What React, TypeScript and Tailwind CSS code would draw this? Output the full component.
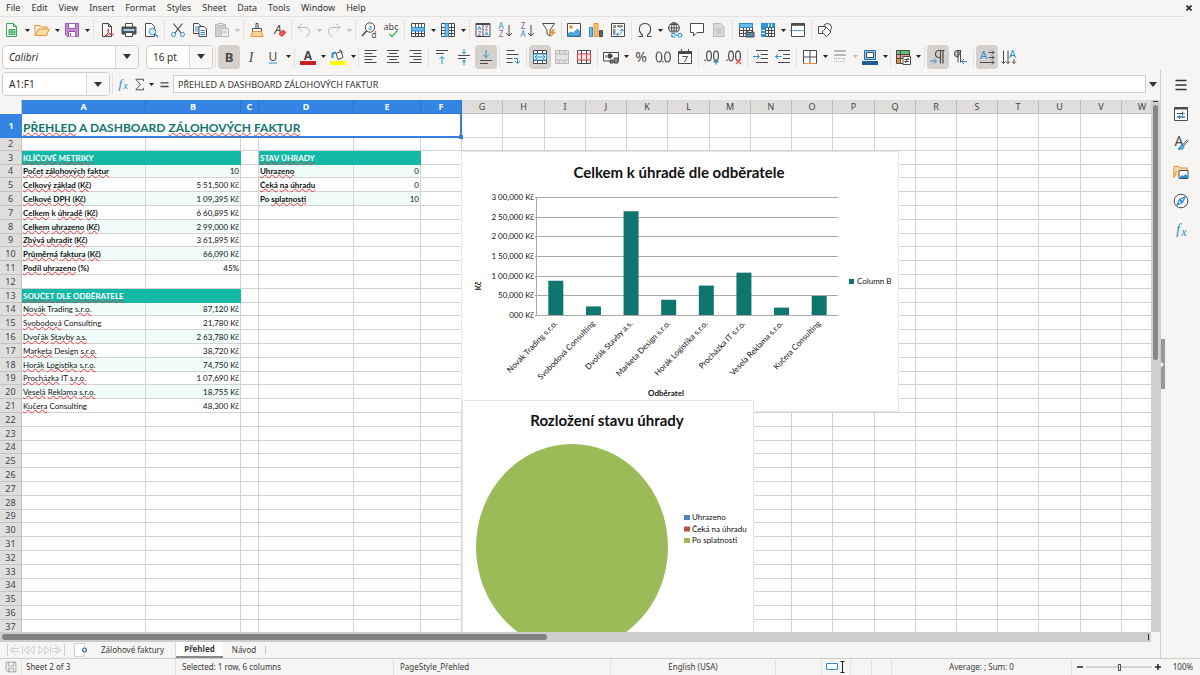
import { useState } from 'react';
import type { ReactNode } from 'react';
import { clsx } from 'clsx';

const MENUS = ['File', 'Edit', 'View', 'Insert', 'Format', 'Styles', 'Sheet', 'Data', 'Tools', 'Window', 'Help'];

const INK = '#4a4a4a';
const BLUE = '#2a8fd0';
const ORANGE = '#ed8f33';
const PURPLE = '#9a57ad';
const RED = '#dc3b42';
const GREY = '#b9b8b6';

/* ---------- icons, all on a 16 x 16 box ---------- */

function Icon({ children, size = 16 }: { children: ReactNode; size?: number }) {
  return (
    <svg width={size} height={size} viewBox="0 0 16 16" fill="none" stroke={INK} strokeWidth="1" aria-hidden="true" className="shrink-0 overflow-visible">
      {children}
    </svg>
  );
}

function Glyph({ x, y, size = 8, fill = INK, bold, serif, italic, children }: {
  x: number; y: number; size?: number; fill?: string; bold?: boolean; serif?: boolean; italic?: boolean; children: string;
}) {
  return (
    <text
      x={x} y={y} fontSize={size} fill={fill} stroke="none" textAnchor="middle"
      fontWeight={bold ? 700 : 400} fontStyle={italic ? 'italic' : 'normal'}
      fontFamily={serif ? 'Liberation Serif, serif' : 'Noto Sans, sans-serif'}
    >
      {children}
    </text>
  );
}

const DOC = 'M3.5 1.5h6l3 3v10h-9z M9.5 1.5v3h3';
const GRID = 'M1.5 1.5h13v13h-13z M1.5 5.5h13 M1.5 8.5h13 M1.5 11.5h13 M5.5 1.5v13 M8.5 1.5v13 M11.5 1.5v13';

const ICONS: Record<string, ReactNode> = {
  new: <><path d="M2.5 1.5h7l3 3v10h-10z" fill="#fff" stroke="#38a852" /><path d="M9.5 1.5v3h3" stroke="#38a852" /><path d="M5 7.5h6v5H5z M5 10h6 M8 7.5v5" fill="#b9e6c2" stroke="#38a852" /></>,
  open: <path d="M.8 3.5h5l1.5 1.5H13v2M1 3.5v10h11.5L15.3 7H4.5L1.5 13.5" fill="#fcdca8" stroke={ORANGE} />,
  save: <><path d="M1.5 1.5h13v13h-11l-2-2z" fill="#c98bd6" stroke={PURPLE} /><path d="M4.5 1.5h7v5h-7z" fill="#fff" stroke={PURPLE} /><path d="M4.5 14.500v-5h7v5" fill="#fff" stroke={PURPLE} /><path d="M6.500 11v3" stroke={PURPLE} /></>,
  pdf: <><path d={DOC} fill="#fff" /><path d="M6 14c3-2 4-5 3.500-6.500-.8-1-1.300 1 .2 3.200 1.500 2 4 2.800 4.800 2 .4-1-4-1.200-8 1.300z" stroke={RED} /></>,
  print: <><path d="M4.500 5V1.500h7V5" fill="#fff" /><path d="M1 5h14v7H1z" fill="#555" /><path d="M2.500 8h11" stroke="#9bd0f0" strokeWidth="2" /><path d="M4.500 10.500h7v4h-7z" fill="#fff" /></>,
  preview: <><path d="M2.500 1.500h6l3 3v10h-9z" fill="#fff" /><circle cx="9.500" cy="9.500" r="3.200" fill="#e6f4fd" stroke={BLUE} /><path d="M12 12l3 3" stroke={BLUE} strokeWidth="1.500" /></>,
  cut: <><path d="M3.500 1.500l7.500 9.500M12.500 1.500L5 11" strokeWidth="1.200" /><circle cx="3.500" cy="12.500" r="2" stroke={BLUE} /><circle cx="12.500" cy="12.500" r="2" stroke={BLUE} /></>,
  copy: <><path d="M1.500 1.500h5l2.500 2.500v7.500H1.500z" fill="#fff" /><path d="M3 5h4M3 7h4M3 9h3" stroke={BLUE} /><path d="M7 4.500h5l2.500 2.500v7.500H7z" fill="#fff" /><path d="M8.500 8.500h4.500M8.500 10.500h4.500M8.500 12.500h4.500" stroke={BLUE} /></>,
  paste: <><path d="M1.500 2.500h10v12h-10z" fill="#d0cfcd" stroke={GREY} /><path d="M4 1.500h5v2H4z M7.500 6.500h7v8h-7z" fill="#f4f3f2" stroke={GREY} /><path d="M9 9h4M9 11h4" stroke={GREY} /></>,
  brush: <><path d="M7 1.500h2v5H7z" fill="#fff" /><path d="M3.500 6.500h9v3h-9z" fill="#fff" /><path d="M3.500 9.500L2 14.500h12l-1.500-5z" fill="#fcd39a" stroke={ORANGE} /></>,
  clear: <><Glyph x={7} y={12} size={13} italic>A</Glyph><path d="M8 12l4-4 3 2.500-4 4z" fill="#ea5b62" stroke={RED} /></>,
  undo: <path d="M6 1.500L2 5.500l4 4M2 5.500h7c6 0 6 6.500 1 9" stroke={GREY} />,
  redo: <path d="M10 1.500l4 4-4 4M14 5.500H7c-6 0-6 6.500-1 9" stroke={GREY} />,
  find: <><circle cx="9" cy="5.500" r="4.700" fill="#fff" /><path d="M5.500 9L1 14" strokeWidth="1.500" /><Glyph x={9} y={8} size={7} fill={BLUE}>a</Glyph><Glyph x={13} y={15.500} size={8}>d</Glyph></>,
  spell: <><Glyph x={8} y={7.500} size={9}>abc</Glyph><path d="M6.500 12l2.500 2.500L14.500 8.500" stroke="#38b35a" strokeWidth="1.300" /></>,
  row: <><path d={GRID} fill="#fff" /><path d="M1.500 5.500h13v3.500h-13z" fill="#6db9e8" stroke={BLUE} /></>,
  col: <><path d={GRID} fill="#fff" /><path d="M5 1.500h3.500v13H5z" fill="#6db9e8" stroke={BLUE} /></>,
  // letters too small for type at this size, so plain strokes
  sort: (
    <>
      <path d="M1 1.500h14v13H1z M8 1.500v13" fill="#fff" /><path d="M1 2h14" strokeWidth="2" />
      <path d="M2.800 8l1.700-4 1.700 4M3.400 6.700h2.200M9.800 13.500l1.700-4 1.700 4M10.400 12.200h2.200" stroke={BLUE} strokeWidth=".9" />
      <path d="M3 9.700h3L3 13.500h3M10 4.200h3L10 8h3" stroke={PURPLE} strokeWidth=".9" />
    </>
  ),
  asc: <><Glyph x={4} y={7} fill={BLUE}>A</Glyph><Glyph x={4} y={15} fill={PURPLE}>Z</Glyph><path d="M12 3v11M9 11l3 3 3-3" /></>,
  desc: <><Glyph x={4} y={7} fill={PURPLE}>Z</Glyph><Glyph x={4} y={15} fill={BLUE}>A</Glyph><path d="M12 3v11M9 11l3 3 3-3" /></>,
  filter: <><path d="M1.500 1.500h12L9 8v6l-3-2V8z" fill="#fff" /><path d="M11.500 7.500L9 11.500h2.500L9.500 15l5-5H12l1.500-2.500z" fill={ORANGE} stroke={ORANGE} strokeWidth=".5" /></>,
  image: <><path d="M1.500 1.500h13v13h-13z" fill="#fff" /><circle cx="5" cy="5" r="1.300" fill={ORANGE} stroke={ORANGE} /><path d="M2 12l3-2 2 1.500L11.500 7l2.500 3v4H2z" fill="#58a9dd" stroke={BLUE} /></>,
  chart: <><path d="M1.500 5.500h3v9h-3z" fill="#6db9e8" stroke={BLUE} /><path d="M6 1.500h4v13H6z" fill="#fbc274" stroke={ORANGE} /><path d="M11.500 8.500h3v6h-3z" fill="#666" /></>,
  pivot: <><path d="M1.500 1.500h13v13h-13z" fill="#fff" /><path d="M3.500 3.500h2v2h-2z M7.500 3.500h5v1.500h-5z M3.500 7.500h1.500v5H3.500z" fill="#999" stroke="#888" /><path d="M7 12.500c4 0 5-2 5-5M10 9l2-2 2 2M8.500 10.500l-2 2 2 1.500" stroke={BLUE} /></>,
  omega: <path d="M1.500 14.500h4v-1.500C.5 9 1.500 1.500 8 1.500S15.500 9 10.500 13v1.500h4" strokeWidth="1.100" />,
  link: <><circle cx="7" cy="6" r="5.300" fill="#fff" /><path d="M1.500 6h11M7 .7v10.500M3 2.500h8M3 9h8" /><ellipse cx="7" cy="6" rx="2.500" ry="5.300" /><path d="M3 10.500h13v5H3z" fill="#f6f5f4" stroke="none" /><path d="M8 11.500H6a1.800 1.800 0 000 3.500h2M11 11.500h2.500a1.800 1.800 0 010 3.500H11M7.500 13.200h4.500" stroke={BLUE} strokeWidth="1.200" /></>,
  comment: <path d="M1.500 1.500h13v9H8L4.500 14v-3.500h-3z" fill="#fff" />,
  headfoot: <><path d="M2.500 1.500h7.500l3 3v10H2.500z" fill="#dddcda" stroke={GREY} /><path d="M4.500 7h6M4.500 9h6M4.500 11h6" stroke={GREY} /></>,
  area: <><path d={GRID} fill="#fff" /><path d="M1.500 1.500h13v4h-13z" fill="#6db9e8" stroke={BLUE} /><path d="M8 10h8v5H8z" fill="#5a88a8" stroke={INK} /><path d="M10 8.500h4v2h-4z" fill="#fff" /></>,
  freeze: <><path d={GRID} fill="#fff" /><path d="M1.500 1.500h13v3.500H5v9.500H1.500z" fill="#2f9ade" stroke={BLUE} /><path d="M1.500 8.500H5M1.500 11.500H5M8.500 1.500V5M11.500 1.500V5" stroke="#fff" /></>,
  split: <><path d="M1.500 1.500h13v13h-13z" fill="#fff" /><path d="M1.500 2.500h13" strokeWidth="2.500" /><path d="M0 8.500h16" stroke={BLUE} strokeDasharray="3 1" /></>,
  shapes: <><circle cx="10.500" cy="5.500" r="4" fill="#fff" /><path d="M1.500 4.500h7v7h-7z" fill="#f6f5f4" /><path d="M9.500 5.500l4.500 4.500-4.500 4.500L5 10z" fill="#fff" /></>,

  bold: <Glyph x={8} y={13} size={13} bold>B</Glyph>,
  italic: <Glyph x={8} y={13} size={14} serif italic>I</Glyph>,
  underline: <><Glyph x={8} y={12} size={12}>U</Glyph><path d="M4 14h8" stroke={BLUE} /></>,
  color: <><Glyph x={8} y={10.500} size={12} bold>A</Glyph><path d="M0 14h16" stroke="#c9211e" strokeWidth="4" /></>,
  highlight: <><path d="M6 4.500l5-2 2 6-5 2z" fill="#fff" /><path d="M9 1.500c2-1 3 0 3 3" /><path d="M2.500 9V4.500l3.500-1" stroke={BLUE} strokeWidth="2" /><path d="M0 14h16" stroke="#ffff00" strokeWidth="4" /></>,
  left: <path d="M1.500 1.500h12M1.500 4.500h8M1.500 7.500h12M1.500 10.500h8M1.500 13.500h12" />,
  center: <path d="M2 1.500h12M4 4.500h8M2 7.500h12M4 10.500h8M2 13.500h12" />,
  right: <path d="M2.500 1.500h12M6.500 4.500h8M2.500 7.500h12M6.500 10.500h8M2.500 13.500h12" />,
  top: <><path d="M2 1.500h12M2 4.500h8" /><path d="M8 15V7.500M5.500 10L8 7.500l2.500 2.500" stroke={BLUE} /></>,
  middle: <><path d="M2 6.500h12M2 9.500h8" /><path d="M8 0v5M6 3l2 2 2-2M8 16v-5M6 13l2-2 2 2" stroke={BLUE} /></>,
  bottom: <><path d="M2 11.500h12M2 14.500h8" /><path d="M8 1v7.500M5.500 6L8 8.500 10.500 6" stroke={BLUE} /></>,
  wrap: <><path d="M1.500 1.500h8M1.500 5.500h12M1.500 9.500h6M1.500 13.500h6" /><path d="M9 9.500h3.500V14M10 12l2.500 2.500L15 12" stroke={BLUE} /></>,
  merge: <><path d="M1.500 1.500h13v13h-13z M1.500 4.500h13 M1.500 11.500h13 M5.500 1.500v3 M10.500 1.500v3 M5.500 11.500v3 M10.500 11.500v3" fill="#fff" /><path d="M1.500 5h13v6h-13z" stroke={BLUE} fill="#e6f4fd" /><path d="M3 8h10M5 6L3 8l2 2M11 6l2 2-2 2" stroke={BLUE} /></>,
  mergeCells: <path d="M1.500 1.500h13v13h-13z M1.500 5h13 M1.500 11h13 M5.500 1.500v3.500 M10.500 1.500v3.500 M5.500 11v3.500 M10.500 11v3.500" fill="#e4e3e1" stroke={GREY} />,
  unmerge: <><path d="M1.500 1.500h13v13h-13z M5.500 1.500v3.500 M10.500 1.500v3.500 M5.500 11v3.500 M10.500 11v3.500" fill="#fff" /><path d="M1.500 5h13v6h-13z M5.500 5v6 M10.500 5v6" fill="#fbe6e6" stroke={RED} /></>,
  currency: <><path d="M.5 3.500h15v8.500H.5z" fill="#fff" /><circle cx="7" cy="7" r="2.200" fill={INK} /><path d="M7 14v-3h3v3zM11 14V9h4v5z" fill="#888" /><path d="M3 6v3" /></>,
  percent: <Glyph x={8} y={13} size={14}>%</Glyph>,
  number: <g strokeWidth="1.200"><ellipse cx="4" cy="8" rx="2.800" ry="5" /><ellipse cx="12.500" cy="8" rx="2.800" ry="5" /><path d="M8 12v1.500" /></g>,
  date: <><path d="M1.500 2.500h13v12h-13z" fill="#fff" /><path d="M1.500 4h13" strokeWidth="2" /><path d="M4.500 0v4M11.500 0v4" /><path d="M5.500 7.500h5L7.500 13" /></>,
  addDec: <><g strokeWidth="1.200"><ellipse cx="5" cy="7" rx="2.400" ry="4.800" /><ellipse cx="12" cy="7" rx="2.400" ry="4.800" /><path d="M1 10.500V12" /></g><path d="M12 10v5.500M9.200 12.800h5.600" stroke={BLUE} strokeWidth="1.200" /></>,
  delDec: <><g strokeWidth="1.200"><ellipse cx="5" cy="7" rx="2.400" ry="4.800" /><ellipse cx="12" cy="7" rx="2.400" ry="4.800" /><path d="M1 10.500V12" /></g><path d="M10 10l5 5M15 10l-5 5" stroke="#ee4b4b" strokeWidth="1.200" /></>,
  indent: <><path d="M3 1.500h12M8 5.500h7M8 9.500h7M3 13.500h12" /><path d="M0 7.500h6M4 5l2.500 2.500L4 10" stroke={BLUE} /></>,
  outdent: <><path d="M3 1.500h12M8 5.500h7M8 9.500h7M3 13.500h12" /><path d="M6.500 7.500h-6M3 5L.5 7.500 3 10" stroke={BLUE} /></>,
  borders: <><path d="M1.500 1.500h13v13h-13z M8 1.500v13 M1.500 8h13" fill="#fff" /><path d="M1.500 14.500h13" stroke={ORANGE} /></>,
  lines: <g stroke={GREY}><path d="M2 2h12M2 6h12" strokeWidth="2" /><path d="M2 9.500h12" strokeDasharray="3 1" /><path d="M2 12.500h12" strokeDasharray="1 1" /></g>,
  borderColor: <><path d="M2.500 1.500h11v9h-11z" fill="#8ec6ee" stroke="#2471b0" /><path d="M4.500 3.500h7v5h-7z" fill="#fff" /><path d="M0 14h16" stroke="#1f5c9b" strokeWidth="4" /></>,
  cond: <><path d="M1.500 1.500h13v13h-13z" fill="#fff" /><path d="M2 2h12v3H2z" fill="#62c07d" stroke="none" /><path d="M2 6h12v3H2z" fill="#f09a8c" stroke="none" /><path d="M2 10h4v4H2z" fill={ORANGE} stroke="none" /><path d="M1.500 5.500h13M1.500 9.500h8M5.500 1.500v13" /><path d="M8 7.500h7.500v8H8z" fill="#fff" /><path d="M9.500 10.500h4.500M9.500 12.500h4.500M13 9l-2.500 5" /></>,
  ltr: <><path d="M14.500 1.500H9a3.500 3.500 0 000 7h1M10.500 1.500v13M13 1.500v13" strokeWidth="1.200" /><path d="M0 12h6M4 9.500L6.500 12 4 14.500" stroke={BLUE} /></>,
  rtl: <><path d="M9 1.500H5a3.300 3.300 0 000 6.500h1z" fill={GREY} /><path d="M6 1.500v12M8.500 1.500v12" /><path d="M15 12.500H9.500M12 10l-2.500 2.500L12 15" stroke={BLUE} /></>,
  horiz: <><Glyph x={4.500} y={10} size={11} fill={BLUE}>A</Glyph><path d="M9.500 3.500H15M13 1.500l2 2-2 2M9.500 8.500H15M13 6.500l2 2-2 2M1 13.500h14M13 11.500l2 2-2 2" /></>,
  vert: <><Glyph x={11.500} y={9} size={11} fill={BLUE}>A</Glyph><path d="M2.500 1.500v13M.5 12.500l2 2 2-2M7 1.500v13M5 12.500l2 2 2-2M13 10v4.500M11 12.500l2 2 2-2" /></>,

  fx: <><Glyph x={5} y={12} size={15} fill={BLUE} serif italic>f</Glyph><Glyph x={11} y={14} size={12} fill={BLUE} serif italic>x</Glyph></>,
  sigma: <path d="M13 4V1.500H3.500L9 8l-5.500 6.500H13V12" strokeWidth="1.200" />,
  equals: <path d="M3 6h10M3 10.500h10" strokeWidth="1.800" />,
  menu: <path d="M2.500 3.500h11M2.500 8h11M2.500 12.500h11" stroke="#333" strokeWidth="1.600" />,
  props: <><path d="M1.500 1.500h13v13h-13z" fill="#fff" /><path d="M1.500 2.500h13" strokeWidth="2" /><path d="M4 7.500h8M4 11h8M9.500 5.500v4" /><path d="M4 11h8M6.500 9v4M9 7.500h3" stroke={BLUE} /></>,
  styles: <><Glyph x={6} y={11} size={14}>A</Glyph><path d="M15 5l-5 5.500" strokeWidth="2" /><path d="M15 5l-5 5.500" stroke="#fff" /><path d="M9 10c-2 0-2 3-4 4 3 1 6 0 6-2.500z" fill="#58a9dd" stroke={BLUE} /></>,
  gallery: <><path d="M.8 13.500v-11h5l1 1.500h7.500v3" fill="#fcdca8" stroke={ORANGE} /><path d="M1 13.500L3.500 7" stroke={ORANGE} /><path d="M6 6.500h9v8H6z" fill="#fff" /><path d="M7 13l2-2 1.500 1L12.500 10l2 2v2H7z" fill={BLUE} stroke="none" /></>,
  navigator: <><circle cx="8" cy="8" r="6.800" fill="#fff" /><path d="M12 4l-2.500 5.500L4 12l2.500-5.500z" fill="#fff" stroke={BLUE} strokeWidth="1.300" /><circle cx="8" cy="8" r="1" fill={BLUE} stroke={BLUE} /></>,
  floppy: <path d="M1.500 1.500h13v13h-11l-2-2z M4.500 1.500v5h7v-5 M4.500 14.500v-5h7v5 M6.500 11v3" stroke="#8b8b8a" />,
};

/* ---------- toolbar pieces ---------- */

function ToolButton({ icon, label, active }: { icon: string; label: string; active?: boolean }) {
  return (
    <button aria-label={label} className={clsx('flex h-6 w-[22px] shrink-0 items-center justify-center rounded-sm', active && 'bg-[#d3d0cd]')}>
      <Icon>{ICONS[icon]}</Icon>
    </button>
  );
}

function Arrow({ label, off }: { label: string; off?: boolean }) {
  return (
    <button aria-label={label} className="flex h-6 w-2 shrink-0 items-center justify-center">
      <svg width="5" height="3" viewBox="0 0 5 3" aria-hidden="true"><path d="M0 0h5L2.500 3z" fill={off ? '#bbb' : '#222'} /></svg>
    </button>
  );
}

function Sep({ tight }: { tight?: boolean }) {
  return <div className={clsx('h-5 w-px shrink-0 bg-[#e2e1df]', tight ? 'mx-px' : 'mx-0.5')} />;
}

// Entries: "icon:Label", "!" prefix for pressed, "v" / "o" for an enabled / disabled drop arrow,
// "-" and "=" for wide and tight separators
function Tools({ items }: { items: string[] }) {
  return (
    <>
      {items.map((item, i) => {
        if (item === '-' || item === '=') return <Sep key={i} tight={item === '='} />;
        if (item === 'v' || item === 'o') return <Arrow key={i} label={items[i - 1].split(':')[1] + ' options'} off={item === 'o'} />;
        const active = item.startsWith('!');
        const [icon, label] = item.replace('!', '').split(':');
        return <ToolButton key={i} icon={icon} label={label} active={active} />;
      })}
    </>
  );
}

const STANDARD = [
  'new:New', 'v', 'open:Open', 'v', 'save:Save', 'v', '-', 'pdf:Export as PDF', 'print:Print', 'preview:Print preview', '-',
  'cut:Cut', 'copy:Copy', 'paste:Paste', 'o', '-', 'brush:Clone formatting', 'clear:Clear formatting', '=',
  'undo:Undo', 'o', 'redo:Redo', 'o', '-', 'find:Find and replace', 'spell:Spelling', '-',
  'row:Row', 'v', 'col:Column', 'v', '-', 'sort:Sort', 'asc:Sort ascending', 'desc:Sort descending', 'filter:AutoFilter', '=',
  'image:Insert image', 'chart:Insert chart', 'pivot:Pivot table', '-', 'omega:Special character', 'v', 'link:Hyperlink',
  'comment:Comment', 'headfoot:Headers and footers', '-', 'area:Print area', 'freeze:Freeze', 'v', 'split:Split window', '-', 'shapes:Shapes',
];

const FORMATTING = [
  '!bold:Bold', 'italic:Italic', 'underline:Underline', 'v', '-', 'color:Font color', 'v', 'highlight:Background color', 'v', '=',
  'left:Align left', 'center:Center', 'right:Align right', '-', 'top:Align top', 'middle:Center vertically', '!bottom:Align bottom', '-',
  'wrap:Wrap text', '-', '!merge:Merge and center', 'mergeCells:Merge cells', 'unmerge:Unmerge cells', '-',
  'currency:Currency', 'v', 'percent:Percent', 'number:Number', 'date:Date', '-', 'addDec:Add decimal', 'delDec:Delete decimal', '-',
  'indent:Increase indent', 'outdent:Decrease indent', '-', 'borders:Borders', 'v', 'lines:Border style', 'o', 'borderColor:Border color', 'v', '=',
  'cond:Conditional', 'v', '-', '!ltr:Left to right', 'rtl:Right to left', '-', '!horiz:Horizontal text', 'vert:Vertical text',
];

function DropCap() {
  return (
    <svg width="8" height="5" viewBox="0 0 8 5" aria-hidden="true"><path d="M0 0h8L4 5z" fill="#333" /></svg>
  );
}

function Combo({ label, value, className, italic }: { label: string; value: string; className: string; italic?: boolean }) {
  return (
    <div className={clsx('relative h-6 shrink-0 overflow-hidden rounded border border-[#d0cecb] bg-white', className)}>
      <select aria-label={label} className={clsx('block h-[22px] w-full appearance-none pl-1.5 text-[10px] leading-[22px] text-[#2e2e2e] outline-none', italic && 'italic')}>
        <option>{value}</option>
      </select>
      <span className="pointer-events-none absolute inset-y-0 right-0 flex w-[23px] items-center justify-center border-l border-[#d9d7d4] bg-[#f9f8f7]">
        <DropCap />
      </span>
    </div>
  );
}

/* ---------- sheet ---------- */

const COLS = [
  ['A', 124], ['B', 95], ['C', 18], ['D', 95], ['E', 67], ['F', 41], ['G', 41], ['H', 42], ['I', 41], ['J', 41], ['K', 41],
  ['L', 42], ['M', 41], ['N', 41], ['O', 41], ['P', 42], ['Q', 41], ['R', 41], ['S', 41], ['T', 41], ['U', 42], ['V', 41], ['W', 41],
] as const;

// Words between tildes are the ones the spell checker underlines.
const METRICS: [string, string][] = [
  ['~Počet~ ~zálohových~ ~faktur~', '10'],
  ['~Celkový~ ~základ~ (~Kč~)', '5 51,500 Kč'],
  ['~Celkové~ ~DPH~ (~Kč~)', '1 09,395 Kč'],
  ['~Celkem~ k ~úhradě~ (~Kč~)', '6 60,895 Kč'],
  ['~Celkem~ ~uhrazeno~ (~Kč~)', '2 99,000 Kč'],
  ['~Zbývá~ ~uhradit~ (~Kč~)', '3 61,895 Kč'],
  ['~Průměrná~ ~faktura~ (~Kč~)', '66,090 Kč'],
  ['~Podíl~ ~uhrazeno~ (%)', '45%'],
];

const CUSTOMERS = [
  { name: '~Novák~ Trading ~s.r.o.~', total: '87,120 Kč', value: 87120 },
  { name: '~Svobodová~ Consulting', total: '21,780 Kč', value: 21780 },
  { name: '~Dvořák~ ~Stavby~ ~a.s.~', total: '2 63,780 Kč', value: 263780 },
  { name: '~Marketa~ Design ~s.r.o.~', total: '38,720 Kč', value: 38720 },
  { name: '~Horák~ ~Logistika~ ~s.r.o.~', total: '74,750 Kč', value: 74750 },
  { name: '~Procházka~ IT ~s.r.o.~', total: '1 07,690 Kč', value: 107690 },
  { name: '~Veselá~ ~Reklama~ ~s.r.o.~', total: '18,755 Kč', value: 18755 },
  { name: '~Kučera~ Consulting', total: '48,300 Kč', value: 48300 },
];

const STATUSES: [string, string][] = [
  ['~Uhrazeno~', '0'],
  ['~Čeká~ ~na~ ~úhradu~', '0'],
  ['Po ~splatnosti~', '10'],
];

interface Cell {
  text?: string;
  kind: 'label' | 'text' | 'number' | 'head';
  band?: boolean;
}

const CELLS: Record<string, Cell> = {
  A3: { text: '~KLÍČOVÉ~ ~METRIKY~', kind: 'head' },
  B3: { kind: 'head' },
  D3: { text: '~STAV~ ~ÚHRADY~', kind: 'head' },
  E3: { kind: 'head' },
  A13: { text: '~SOUČET~ ~DLE~ ~ODBĚRATELE~', kind: 'head' },
  B13: { kind: 'head' },
};
METRICS.forEach(([label, value], i) => {
  CELLS[`A${i + 4}`] = { text: label, kind: 'label', band: i % 2 === 0 };
  CELLS[`B${i + 4}`] = { text: value, kind: 'number', band: i % 2 === 0 };
});
STATUSES.forEach(([label, value], i) => {
  CELLS[`D${i + 4}`] = { text: label, kind: 'label', band: i % 2 === 0 };
  CELLS[`E${i + 4}`] = { text: value, kind: 'number', band: i % 2 === 0 };
});
CUSTOMERS.forEach((c, i) => {
  CELLS[`A${i + 14}`] = { text: c.name, kind: 'text', band: i % 2 === 0 };
  CELLS[`B${i + 14}`] = { text: c.total, kind: 'number', band: i % 2 === 0 };
});

function Spelled({ text }: { text: string }) {
  return (
    <>
      {text.split('~').map((part, i) =>
        i % 2
          ? <span key={i} className="underline decoration-[#e8393f] decoration-wavy decoration-1 underline-offset-0 [text-decoration-skip-ink:none]">{part}</span>
          : part
      )}
    </>
  );
}

function Sheet() {
  const rows = Array.from({ length: 36 }, (_, i) => i + 2);
  return (
    <table className="w-max table-fixed border-separate border-spacing-0">
      <colgroup>
        <col style={{ width: 22 }} />
        {COLS.map(([name, width]) => <col key={name} style={{ width }} />)}
      </colgroup>
      <thead>
        <tr className="h-3.5 text-[9px] leading-[13px]">
          <th className="border-r border-[#c4c3c1] bg-[#f6f5f4] p-0" />
          {COLS.map(([name], i) => (
            <th
              key={name}
              className={clsx(
                'border-r border-b p-0',
                i < 6 ? 'border-[#2f74cc] bg-[#3584e4] font-bold text-white' : 'border-[#bdbcba] bg-[#dfdedc] font-normal text-[#444]'
              )}
            >
              {name}
            </th>
          ))}
        </tr>
      </thead>
      <tbody>
        <tr className="h-6">
          <th className="bg-[#3584e4] p-0 text-[9px] leading-3 font-bold text-white">1</th>
          <td colSpan={6} className="relative border-r-2 border-b-2 border-[#3a7fdd] p-0 px-px align-bottom font-[Lato,sans-serif] text-[12px] leading-4 font-bold text-[#0f766e]">
            <Spelled text="~PŘEHLED~ A DASHBOARD ~ZÁLOHOVÝCH~ ~FAKTUR~" />
            <span className="absolute -right-[3px] -bottom-[3px] size-1 bg-[#3a7fdd]" />
          </td>
          {COLS.slice(6).map(([name]) => <td key={name} className="border-r border-b border-[#d3d3d3] p-0" />)}
        </tr>
        {rows.map(row => (
          <tr key={row} className={row === 2 || row % 5 === 4 ? 'h-[13px]' : 'h-3.5'}>
            <th className="border-r border-b border-[#c4c3c1] bg-[#dfdedc] p-0 text-[9px] leading-3 font-normal text-[#444]">{row}</th>
            {COLS.map(([name]) => {
              const cell = CELLS[name + row];
              return (
                <td
                  key={name}
                  className={clsx(
                    'border-r border-b p-0 px-px align-bottom font-[Lato,sans-serif] text-[8px] leading-3 whitespace-nowrap',
                    cell?.kind === 'head' ? 'border-[#14b8a6] bg-[#14b8a6] font-bold text-white' : 'border-[#d3d3d3] text-[#111]',
                    cell?.kind === 'label' && 'font-bold',
                    cell?.kind === 'number' && 'text-right',
                    cell?.band && 'bg-[#f0fdfa]'
                  )}
                >
                  {cell?.text && <Spelled text={cell.text} />}
                </td>
              );
            })}
          </tr>
        ))}
      </tbody>
    </table>
  );
}

/* ---------- charts ---------- */

const TICKS = ['000 Kč', '50,000 Kč', '1 00,000 Kč', '1 50,000 Kč', '2 00,000 Kč', '2 50,000 Kč', '3 00,000 Kč'];

function BarChart() {
  const left = 75, right = 376, top = 45, base = 163;
  const step = (right - left) / CUSTOMERS.length;
  return (
    <svg width="436" height="259" viewBox="0 0 436 259" role="img" aria-label="Celkem k úhradě dle odběratele" fontFamily="Lato, sans-serif" fontSize="8" fill="#111">
      <text x="217" y="26" fontSize="15" fontWeight="700" textAnchor="middle">Celkem k úhradě dle odběratele</text>
      {TICKS.map((tick, i) => {
        const y = Math.round(base - (i * (base - top)) / 6);
        return (
          <g key={tick}>
            <path d={`M${left - 2} ${y + 0.5}H${right}`} stroke="#a9a9a9" />
            <text x={left - 3} y={y + 3} textAnchor="end">{tick}</text>
          </g>
        );
      })}
      <path d={`M${left - 0.5} ${top}V${base}`} stroke="#a9a9a9" />
      {CUSTOMERS.map((c, i) => {
        const cx = left + step * (i + 0.5);
        const h = (c.value / 300000) * (base - top);
        return (
          <g key={c.name}>
            <rect x={cx - 7.500} y={base - h} width="15" height={h} fill="#0f766e" />
            <text textAnchor="end" transform={`translate(${cx + 2} ${base + 9}) rotate(-46)`}>{c.name.replaceAll('~', '')}</text>
          </g>
        );
      })}
      <text textAnchor="middle" fontWeight="700" transform="translate(19 134) rotate(-90)">Kč</text>
      <text x="204" y="244" textAnchor="middle" fontWeight="700">Odběratel</text>
      <rect x="387" y="127" width="5" height="5" fill="#0f766e" />
      <text x="395" y="132">Column B</text>
    </svg>
  );
}

const PIE_LEGEND = [['Uhrazeno', '#4f81bd'], ['Čeká na úhradu', '#c0504d'], ['Po splatnosti', '#9bbb59']];

function PieChart() {
  return (
    <svg width="290" height="260" viewBox="0 0 290 260" role="img" aria-label="Rozložení stavu úhrady" fontFamily="Lato, sans-serif" fontSize="8" fill="#111">
      <text x="144" y="25" fontSize="15" fontWeight="700" textAnchor="middle">Rozložení stavu úhrady</text>
      <ellipse cx="109" cy="146" rx="96" ry="103" fill="#9bbb59" />
      {PIE_LEGEND.map(([name, color], i) => (
        <g key={name}>
          <rect x="221" y={114 + i * 11.500} width="6" height="5" fill={color} />
          <text x="229" y={119 + i * 11.500}>{name}</text>
        </g>
      ))}
    </svg>
  );
}

/* ---------- frame ---------- */

function FormulaBar() {
  const [formula, setFormula] = useState('PŘEHLED A DASHBOARD ZÁLOHOVÝCH FAKTUR');
  return (
    <div className="flex h-[30px] shrink-0 items-center pb-0.5 pl-0.5">
      <div className="flex h-6 w-[108px] shrink-0 overflow-hidden rounded border border-[#d0cecb] bg-white">
        <input aria-label="Name box" defaultValue="A1:F1" className="min-w-0 flex-1 pl-1.5 text-[10px] text-[#2e2e2e] outline-none" />
        <button aria-label="Named ranges" className="flex w-[23px] items-center justify-center border-l border-[#d9d7d4] bg-[#f9f8f7]"><DropCap /></button>
      </div>
      <Sep />
      <button aria-label="Function wizard" className="flex w-4 justify-center"><Icon size={14}>{ICONS.fx}</Icon></button>
      <button aria-label="Select function" className="flex w-4 justify-center"><Icon size={13}>{ICONS.sigma}</Icon></button>
      <Arrow label="Select function options" />
      <button aria-label="Formula" className="flex w-[18px] justify-center"><Icon size={13}>{ICONS.equals}</Icon></button>
      <input
        aria-label="Formula input"
        value={formula}
        onChange={e => setFormula(e.target.value)}
        className="h-[18px] min-w-0 flex-1 border border-[#d0cecb] bg-white px-1 text-[9px] text-[#333] outline-none"
      />
      <button aria-label="Expand formula bar" className="flex w-3.5 justify-center"><DropCap /></button>
    </div>
  );
}

function SheetTabs() {
  return (
    <div className="flex h-4 shrink-0 items-stretch text-[8px] leading-[14px] text-[#3a3a3a]">
      <div className="flex items-center pl-1.5">
        <svg width="60" height="14" viewBox="0 0 60 14" fill="none" stroke="#cfcecc" aria-hidden="true">
          <path d="M1.500 1v12M10 2L4 7l6 5M13 5.500H7v3h6M16.500 3v8M22 3l-4 4 4 4zM28 3l-4 4 4 4zM33 3l4 4-4 4zM39 3l4 4-4 4zM44.500 3v8M49 2l6 5-6 5M46 5.500h6v3h-6M58.500 1v12" />
        </svg>
      </div>
      <button aria-label="Add sheet" className="ml-2 flex w-4 items-center">
        <svg width="14" height="14" viewBox="0 0 14 14" aria-hidden="true">
          <path d="M.5.500h10v13H.5z" fill="#fff" stroke="#d3d2d0" />
          <circle cx="10.500" cy="7" r="2.500" fill="#2f6fb5" /><path d="M9 7h3M10.500 5.500v3" stroke="#fff" />
        </svg>
      </button>
      <button className="w-[86px] border-r border-[#dddcda] text-center whitespace-nowrap">Zálohové faktury</button>
      <button className="w-[47px] border-b-2 border-[#888] bg-white font-bold">Přehled</button>
      <button className="w-[42px]">Návod</button>
      <div className="my-1 w-px bg-[#c4c3c1]" />
    </div>
  );
}

function StatusBar() {
  const [zoom, setZoom] = useState(50);
  const box = 'flex items-center border-r border-[#e2e1df] whitespace-nowrap';
  return (
    <footer className="grid h-[17px] shrink-0 grid-cols-[22px_154fr_218fr_217fr_165fr_46px_29px_21px_20px_180fr_94px_34px] border-t border-[#d0cecb] text-[8px] text-[#3a3a3a]">
      <button aria-label="Save status" className={clsx(box, 'justify-center')}><Icon size={12}>{ICONS.floppy}</Icon></button>
      <span className={clsx(box, 'pl-1')}>Sheet 2 of 3</span>
      <span className={clsx(box, 'pl-1.5')}>Selected: 1 row, 6 columns</span>
      <span className={clsx(box, 'pl-1.5')}>PageStyle_Přehled</span>
      <span className={clsx(box, 'justify-center')}>English (USA)</span>
      <span className={box} />
      <span className={clsx(box, 'justify-center')}>
        <svg width="20" height="12" viewBox="0 0 20 12" fill="none" aria-hidden="true">
          <path d="M.5 2.500h11v6H.5z" fill="#fff" stroke={BLUE} /><path d="M14.500.500h4M16.500.500v11M14.500 11.500h4" stroke="#222" />
        </svg>
      </span>
      <span className={box} />
      <span className={box} />
      <span className={clsx(box, 'justify-center')}>Average: ; Sum: 0</span>
      <span className="flex items-center justify-between px-1">
        <button aria-label="Zoom out" className="flex"><svg width="8" height="8" viewBox="0 0 8 8"><path d="M1 4h6" stroke="#222" strokeWidth="1.500" /></svg></button>
        <input
          type="range" aria-label="Zoom" value={zoom} onChange={e => setZoom(Number(e.target.value))}
          className="h-2 w-[66px] appearance-none bg-linear-to-b from-transparent from-40% via-[#999] via-50% to-transparent to-60% [&::-webkit-slider-thumb]:h-[7px] [&::-webkit-slider-thumb]:w-[3px] [&::-webkit-slider-thumb]:appearance-none [&::-webkit-slider-thumb]:border [&::-webkit-slider-thumb]:border-[#555] [&::-webkit-slider-thumb]:bg-white"
        />
        <button aria-label="Zoom in" className="flex"><svg width="8" height="8" viewBox="0 0 8 8"><path d="M1 4h6M4 1v6" stroke="#222" strokeWidth="1.500" /></svg></button>
      </span>
      <span className="flex items-center justify-center">100%</span>
    </footer>
  );
}

export default function App() {
  return (
    <div className="flex h-screen flex-col overflow-hidden bg-[#f6f5f4] font-['Noto_Sans',sans-serif] text-[#333]">
      <header className="shrink-0">
        <div className="mr-4 flex h-[17px] items-center border-b border-[#e2e1df]">
          <nav className="flex gap-[11px] pl-1.5 text-[9px]">
            {MENUS.map(menu => <button key={menu}>{menu}</button>)}
          </nav>
          <button aria-label="Close document" className="-mr-2 ml-auto flex">
            <svg width="6" height="6" viewBox="0 0 6 6" aria-hidden="true"><path d="M.5.500l5 5M5.500.500l-5 5" stroke="#222" strokeWidth="1.600" /></svg>
          </button>
        </div>
        <div className="flex h-[26px] items-center pl-px"><Tools items={STANDARD} /></div>
        <div className="flex h-[27px] items-center pl-0.5">
          <Combo label="Font name" value="Calibri" italic className="mr-[7px] w-[137px]" />
          <Combo label="Font size" value="16 pt" className="w-[67px]" />
          <Sep />
          <Tools items={FORMATTING} />
        </div>
      </header>

      <div className="flex min-h-0 flex-1">
        <main className="flex min-w-0 flex-1 flex-col">
          <FormulaBar />
          <div className="flex min-h-0 flex-1">
            <div className="relative min-w-0 flex-1 overflow-hidden bg-white">
              <Sheet />
              <div className="absolute top-[51px] left-[461px] border border-[#e6e6e6] bg-white"><BarChart /></div>
              <div className="absolute top-[300px] left-[462px] border border-[#e6e6e6] bg-white"><PieChart /></div>
            </div>
            <div className="w-[9px] shrink-0 bg-[#d0d0d0] px-0.5 pt-px">
              <div className="mb-[3px] h-px bg-[#333]" />
              <div className="h-[48%] rounded-full bg-[#868686]" />
            </div>
          </div>
          <div className="mr-[9px] flex h-[10px] shrink-0 items-center justify-between bg-[#cdcdcd] px-0.5">
            <div className="h-1.5 w-[47.5%] rounded-full bg-[#808080]" />
            <div className="h-1.5 w-px bg-[#333]" />
          </div>
          <SheetTabs />
        </main>
        <aside className="relative flex w-10 shrink-0 flex-col items-center gap-[13px] border-l border-[#d0cecb] pt-[7px]">
          {['menu', 'props', 'styles', 'gallery', 'navigator', 'fx'].map(name => (
            <button key={name} aria-label={name}><Icon>{ICONS[name]}</Icon></button>
          ))}
          <button aria-label="Hide sidebar" className="absolute top-[269px] left-0 flex h-[50px] w-1 items-center bg-[#999]">
            <svg width="3" height="5" viewBox="0 0 3 5" aria-hidden="true"><path d="M0 0l3 2.500L0 5z" fill="#fff" /></svg>
          </button>
        </aside>
      </div>
      <StatusBar />
    </div>
  );
}
